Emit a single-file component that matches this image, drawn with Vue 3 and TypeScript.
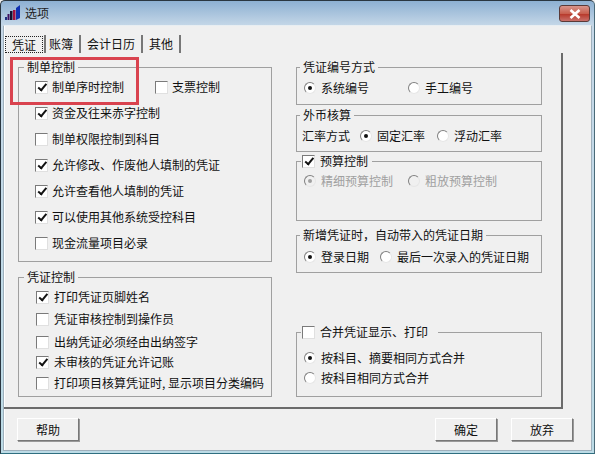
<script setup lang="ts">
interface Row { label: string; checked: boolean; gap: number }
const makeRows = ['资金及往来赤字控制', '制单权限控制到科目', '允许修改、作废他人填制的凭证', '允许查看他人填制的凭证', '可以使用其他系统受控科目', '现金流量项目必录']
const makeChecked = [true, false, true, true, true, false]
const voucherRows: Row[] = [
  { label: '打印凭证页脚姓名', checked: true, gap: 0 },
  { label: '凭证审核控制到操作员', checked: false, gap: 2 },
  { label: '出纳凭证必须经由出纳签字', checked: false, gap: 3 },
  { label: '未审核的凭证允许记账', checked: true, gap: 0 },
  { label: '打印项目核算凭证时, 显示项目分类编码', checked: false, gap: 1 }
]
const tabs = ['凭证', '账簿', '会计日历', '其他']
</script>

<template>
  <div class="window">
    <header class="titlebar">
      <svg class="logo" width="16" height="16" viewBox="0 0 16 16">
        <rect x="0" y="12" width="2" height="3" fill="#203080" />
        <rect x="2.5" y="9" width="2" height="6" fill="#401060" />
        <rect x="5" y="6" width="2.5" height="9" fill="#101030" />
        <rect x="8" y="5" width="2.5" height="10" fill="#a01040" />
        <path d="M11 3 L15 0 V13 L11 15 Z" fill="#1030b0" />
      </svg>
      <span class="title">选项</span>
      <button class="close" aria-label="关闭">
        <svg width="14" height="10" viewBox="0 0 14 10"><path d="M2.5 1 L11.5 9 M11.5 1 L2.5 9" stroke="#fff" stroke-width="2.6" /></svg>
      </button>
    </header>

    <div class="client">
      <nav class="tabs">
        <div v-for="(t, i) in tabs" :key="t" class="tab" :class="{ active: i === 0 }"><span>{{ t }}</span></div>
      </nav>

      <section class="page">
        <div class="col left">
          <fieldset class="group make">
            <legend>制单控制</legend>
            <div class="body">
              <div class="first">
                <label class="check"><i class="box on"></i>制单序时控制</label>
                <label class="check second"><i class="box"></i>支票控制</label>
              </div>
              <label v-for="(r, i) in makeRows" :key="r" class="check row"><i class="box" :class="{ on: makeChecked[i] }"></i>{{ r }}</label>
            </div>
          </fieldset>

          <fieldset class="group voucher">
            <legend>凭证控制</legend>
            <div class="body">
              <label v-for="r in voucherRows" :key="r.label" class="check vrow" :style="{ marginTop: r.gap + 'px' }"><i class="box" :class="{ on: r.checked }"></i>{{ r.label }}</label>
            </div>
          </fieldset>
        </div>

        <div class="col right">
          <fieldset class="group g1">
            <legend>凭证编号方式</legend>
            <div class="radios wide">
              <label class="radio"><i class="dot on"></i>系统编号</label>
              <label class="radio"><i class="dot"></i>手工编号</label>
            </div>
          </fieldset>

          <fieldset class="group g2">
            <legend>外币核算</legend>
            <div class="radios fx">
              <span class="fx-label">汇率方式</span>
              <label class="radio"><i class="dot on"></i>固定汇率</label>
              <label class="radio"><i class="dot"></i>浮动汇率</label>
            </div>
          </fieldset>

          <fieldset class="group g3">
            <legend class="check-legend"><i class="box on"></i>预算控制</legend>
            <div class="radios budget disabled">
              <label class="radio"><i class="dot on"></i>精细预算控制</label>
              <label class="radio"><i class="dot"></i>粗放预算控制</label>
            </div>
          </fieldset>

          <fieldset class="group g4">
            <legend>新增凭证时，自动带入的凭证日期</legend>
            <div class="radios date">
              <label class="radio"><i class="dot on"></i>登录日期</label>
              <label class="radio"><i class="dot"></i>最后一次录入的凭证日期</label>
            </div>
          </fieldset>

          <fieldset class="group g5">
            <legend class="check-legend merge"><i class="box"></i>合并凭证显示、打印</legend>
            <div class="stack-wrap">
              <label class="radio stack"><i class="dot on"></i>按科目、摘要相同方式合并</label>
              <label class="radio stack"><i class="dot"></i>按科目相同方式合并</label>
            </div>
          </fieldset>
        </div>
      </section>

      <footer class="actions">
        <button class="btn">帮助</button>
        <div class="actions-right">
          <button class="btn">确定</button>
          <button class="btn">放弃</button>
        </div>
      </footer>
    </div>

    <div class="highlight"></div>
  </div>
</template>

<style>
html, body { margin: 0; padding: 0; background: #f0f0f0; }
</style>

<style scoped>
.window {
  position: relative;
  width: 595px;
  height: 454px;
  box-sizing: border-box;
  overflow: hidden;
  display: flex;
  flex-direction: column;
  background: linear-gradient(180deg, #8db0d2 0, #c6d8e8 25px, #bcdbe6 100%);
  border: 1px solid #2a3640;
  border-right-color: #4a6a78;
  border-bottom-color: #2f6f80;
  border-radius: 5px 5px 0 0;
  font: 12px/16px "Noto Sans CJK SC", "Liberation Sans", sans-serif;
  color: #111;
}
.titlebar {
  height: 24px;
  flex: none;
  display: flex;
  align-items: center;
  padding: 0 4px;
  position: relative;
}
.logo { flex: none; }
.title { margin-left: 4px; font-size: 12px; color: #222; }
.close {
  position: absolute;
  top: 4px;
  right: 4px;
  width: 31px;
  height: 17px;
  padding: 0;
  border: 1px solid #5a3a38;
  border-radius: 3px;
  background: linear-gradient(180deg, #d8958c 0, #c8604f 50%, #b83a2c 55%, #c9706a 100%);
  display: flex;
  align-items: center;
  justify-content: center;
}
.client {
  flex: 1;
  margin: 0 2px 2px 2px;
  background: #f0f0f0;
  display: flex;
  flex-direction: column;
  border: 1px solid #9fb0bc;
  border-top-color: #e8eef2;
  box-shadow: inset 1px 0 0 #fff;
  padding: 9px 0 0 0;
  min-height: 0;
}
.tabs {
  display: flex;
  height: 18px;
  padding-left: 1px;
  flex: none;
}
.tab {
  padding: 0 6px;
  display: flex;
  align-items: center;
  border-right: 2px solid #777;
  height: 18px;
}
.tab.active {
  padding: 0 1px 0 0;
  margin-right: 0;
}
.tab.active + .tab { padding-left: 3px; }
.tab.active span {
  outline: 1px dotted #222;
  outline-offset: -1px;
  padding: 0 7px;
  height: 17px;
  line-height: 17px;
}
.page {
  height: 356px;
  width: 559px;
  box-sizing: border-box;
  flex: none;
  display: flex;
  border-right: 2px solid #6b6b6b;
  border-bottom: 2px solid #6b6b6b;
  padding: 7px 0 0 14px;
}
.col { display: flex; flex-direction: column; }
.left { width: 254px; }
.right { width: 246px; margin-left: 24px; }
.group {
  margin: 0;
  padding: 0;
  min-width: 0;
  box-sizing: border-box;
  border: 1px solid #a0a0a0;
  border-radius: 0;
}
legend {
  padding: 0 3px;
  margin-left: 3px;
  line-height: 14px;
  height: 14px;
  font-size: 12px;
}
.check-legend {
  display: flex;
  align-items: center;
  margin-left: 4px;
  padding: 0 4px 0 1px;
}
.check-legend .box { margin-right: 5px; }
.check-legend.merge { padding-right: 10px; }
.make { height: 202px; }
.make legend, .voucher legend { margin-left: 5px; }
.make .body { padding-left: 16px; }
.voucher { height: 127px; margin-top: 8px; }
.voucher .body { padding: 3px 0 0 17px; }
.voucher .box { margin-right: 5px; }
.vrow { height: 20px; }
.row { height: 26px; }
.first { display: flex; align-items: center; height: 26px; }
.second { margin-left: 31px; }
.check { display: flex; align-items: center; white-space: nowrap; }
.box {
  flex: none;
  width: 11px;
  height: 11px;
  margin-right: 4px;
  background: #fff;
  border-top: 1px solid #7a7a7a;
  border-left: 1px solid #7a7a7a;
  border-right: 1px solid #e0e0e0;
  border-bottom: 1px solid #e0e0e0;
  position: relative;
}
.box.on::after {
  content: "";
  position: absolute;
  left: 3.5px;
  top: 0.5px;
  width: 3px;
  height: 6.5px;
  border: solid #111;
  border-width: 0 2px 2px 0;
  transform: rotate(40deg);
}
.radio { display: flex; align-items: center; white-space: nowrap; }
.dot {
  flex: none;
  width: 12px;
  height: 12px;
  box-sizing: border-box;
  margin-right: 5px;
  border-radius: 50%;
  background: #fff;
  border: 1px solid;
  border-color: #808080 #e6e6e6 #e6e6e6 #808080;
  position: relative;
}
.dot.on::after {
  content: "";
  position: absolute;
  left: 3px;
  top: 3px;
  width: 4px;
  height: 4px;
  border-radius: 50%;
  background: #111;
}
.radios { display: flex; align-items: center; height: 20px; padding-left: 7px; }
.g1 { height: 45px; }
.wide { margin-top: 4px; }
.wide .radio:first-child { width: 104px; }
.g2 { height: 44px; margin-top: 3px; }
.fx { margin-top: 4px; padding-left: 5px; }
.fx-label { width: 58px; }
.fx .radio:nth-child(2) { width: 77px; }
.g3 { height: 67px; margin-top: 2px; }
.budget { margin-top: 3px; }
.budget .radio:first-child { width: 104px; }
.disabled { color: #a0a0a0; }
.disabled .dot { background: #f0f0f0; }
.disabled .dot.on::after { background: #a0a0a0; }
.g4 { height: 45px; margin-top: 7px; }
.date { margin-top: 5px; }
.date .radio:first-child { width: 76px; }
.g5 { height: 72px; margin-top: 52px; }
.stack-wrap { padding: 9px 0 0 7px; }
.stack { height: 20px; }
.actions {
  flex: none;
  display: flex;
  justify-content: space-between;
  padding: 9px 18px 0 13px;
}
.actions-right { display: flex; gap: 14px; }
.btn {
  width: 62px;
  height: 23px;
  padding: 0;
  font: inherit;
  color: #111;
  background: #f0f0f0;
  border: 1px solid;
  border-color: #fff #777 #777 #fff;
  box-shadow: 1px 1px 0 #999;
}
.highlight {
  position: absolute;
  left: 9px;
  top: 56px;
  width: 123px;
  height: 42px;
  border: 3px solid #d9434f;
  pointer-events: none;
}
</style>
